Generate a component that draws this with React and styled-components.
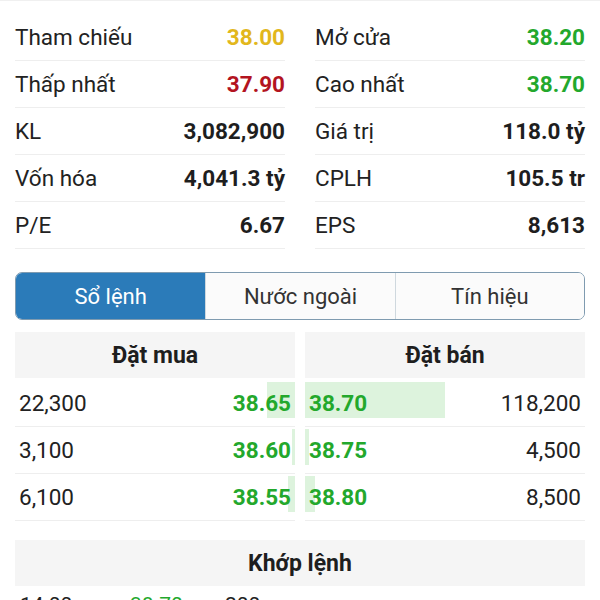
import React, { useState } from 'react'
import styled, { createGlobalStyle } from 'styled-components'

const GlobalStyle = createGlobalStyle`
	html, body {
		margin: 0;
		padding: 0;
		background: #ffffff;
	}
	body {
		font-family: Roboto, "Noto Sans", "Liberation Sans", sans-serif;
		color: #222222;
	}
`

const stats = [
	[
		{ label: 'Tham chiếu', value: '38.00', tone: 'ref' },
		{ label: 'Thấp nhất', value: '37.90', tone: 'down' },
		{ label: 'KL', value: '3,082,900' },
		{ label: 'Vốn hóa', value: '4,041.3 tỷ' },
		{ label: 'P/E', value: '6.67' },
	],
	[
		{ label: 'Mở cửa', value: '38.20', tone: 'up' },
		{ label: 'Cao nhất', value: '38.70', tone: 'up' },
		{ label: 'Giá trị', value: '118.0 tỷ' },
		{ label: 'CPLH', value: '105.5 tr' },
		{ label: 'EPS', value: '8,613' },
	],
]

const bids = [
	{ qty: '22,300', price: '38.65', depth: 10 },
	{ qty: '3,100', price: '38.60', depth: 1.2 },
	{ qty: '6,100', price: '38.55', depth: 2.6 },
]

const asks = [
	{ qty: '118,200', price: '38.70', depth: 50 },
	{ qty: '4,500', price: '38.75', depth: 1.5 },
	{ qty: '8,500', price: '38.80', depth: 3.6 },
]

const tabs = ['Sổ lệnh', 'Nước ngoài', 'Tín hiệu']

const toneColor = {
	ref: '#e2b71c',
	down: '#b3141f',
	up: '#23a82c',
}

const App = () => {
	const [ activeTab, setActiveTab ] = useState(0)

	return (
		<Page>
			<GlobalStyle />
			<Stats>
				{stats.map((column, i) => (
					<StatColumn key={i}>
						{column.map((item) => (
							<StatRow key={item.label}>
								<StatLabel>{item.label}</StatLabel>
								<StatValue tone={item.tone}>{item.value}</StatValue>
							</StatRow>
						))}
					</StatColumn>
				))}
			</Stats>

			<Tabs>
				{tabs.map((tab, i) => (
					<Tab key={tab} active={i === activeTab} onClick={() => setActiveTab(i)}>
						{tab}
					</Tab>
				))}
			</Tabs>

			<Book>
				<BookSide>
					<SectionHeader>Đặt mua</SectionHeader>
					{bids.map((row) => (
						<BookRow key={row.price}>
							<DepthBar side="bid" style={{ width: `${row.depth}%` }} />
							<Qty>{row.qty}</Qty>
							<Price>{row.price}</Price>
						</BookRow>
					))}
				</BookSide>
				<BookSide>
					<SectionHeader>Đặt bán</SectionHeader>
					{asks.map((row) => (
						<BookRow key={row.price}>
							<DepthBar side="ask" style={{ width: `${row.depth}%` }} />
							<Price>{row.price}</Price>
							<Qty>{row.qty}</Qty>
						</BookRow>
					))}
				</BookSide>
			</Book>

			<Matched>
				<SectionHeader>Khớp lệnh</SectionHeader>
				<MatchRow>
					<MatchTime>14:00</MatchTime>
					<MatchPrice>38.70</MatchPrice>
					<MatchQty>200</MatchQty>
				</MatchRow>
			</Matched>
		</Page>
	)
}

const Page = styled.div`
	width: 600px;
	height: 600px;
	overflow: hidden;
	box-sizing: border-box;
	padding: 0 15px;
	border-top: 1px solid #f0f0f0;
`

const Stats = styled.div`
	display: grid;
	grid-template-columns: 1fr 1fr;
	column-gap: 30px;
	padding-top: 13px;
`

const StatColumn = styled.div`
	display: flex;
	flex-direction: column;
`

const StatRow = styled.div`
	display: flex;
	align-items: center;
	justify-content: space-between;
	height: 46px;
	border-bottom: 1px solid #eeeeee;
`

const StatLabel = styled.span`
	font-size: 22.5px;
	color: #222222;
`

const StatValue = styled.span`
	font-size: 22.5px;
	font-weight: 700;
	color: ${(p) => toneColor[p.tone] || '#1e1e1e'};
`

const Tabs = styled.div`
	display: grid;
	grid-template-columns: repeat(3, 1fr);
	margin-top: 23px;
	height: 48px;
	border: 1px solid #7f9bb0;
	border-radius: 7px;
	overflow: hidden;
	box-sizing: border-box;
`

const Tab = styled.div`
	display: flex;
	align-items: center;
	justify-content: center;
	font-size: 22px;
	cursor: pointer;
	background: ${(p) => (p.active ? '#2b7bb9' : '#fbfbfb')};
	color: ${(p) => (p.active ? '#ffffff' : '#333333')};
	& + & {
		border-left: 1px solid #cfd8de;
	}
`

const Book = styled.div`
	display: grid;
	grid-template-columns: 1fr 1fr;
	column-gap: 10px;
	margin-top: 12px;
`

const BookSide = styled.div`
	display: flex;
	flex-direction: column;
`

const SectionHeader = styled.div`
	display: flex;
	align-items: center;
	justify-content: center;
	height: 46px;
	margin-bottom: 2px;
	background: #f5f5f5;
	font-size: 23px;
	font-weight: 700;
	color: #1e1e1e;
`

const BookRow = styled.div`
	position: relative;
	display: flex;
	align-items: center;
	justify-content: space-between;
	height: 46px;
	padding: 0 4px;
	border-bottom: 1px solid #eeeeee;
`

const DepthBar = styled.div`
	position: absolute;
	top: 2px;
	height: 36px;
	background: #ddf3dd;
	${(p) => (p.side === 'bid' ? 'right: 0;' : 'left: 0;')}
`

const Qty = styled.span`
	position: relative;
	font-size: 22.5px;
	color: #222222;
`

const Price = styled.span`
	position: relative;
	font-size: 22.5px;
	font-weight: 700;
	color: #23a82c;
`

const Matched = styled.div`
	margin-top: 19px;
`

const MatchRow = styled.div`
	display: grid;
	grid-template-columns: 110px 95px 1fr;
	align-items: center;
	height: 34px;
	padding: 0 5px;
	font-size: 21px;
`

const MatchTime = styled.span`
	color: #222222;
`

const MatchPrice = styled.span`
	color: #23a82c;
`

const MatchQty = styled.span`
	color: #222222;
`

export default App
